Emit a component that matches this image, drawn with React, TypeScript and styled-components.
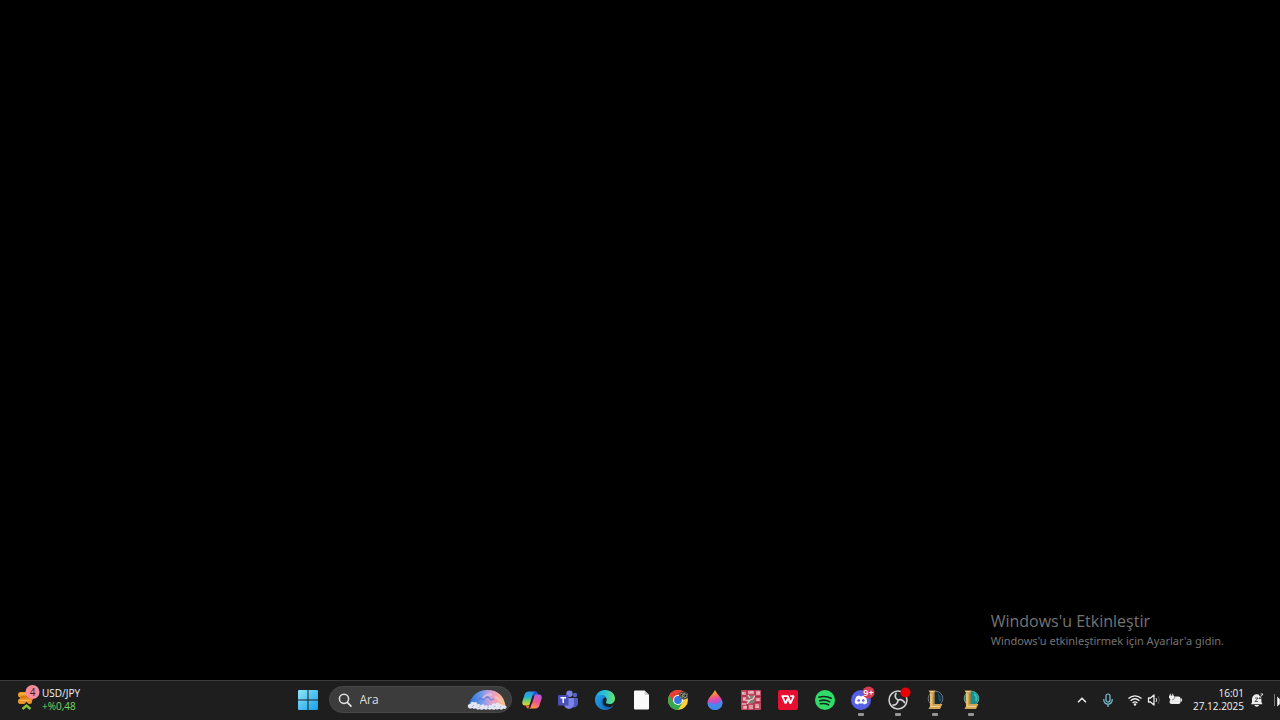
import React from "react";
import styled, { createGlobalStyle } from "styled-components";

const GlobalStyle = createGlobalStyle`
  * { box-sizing: border-box; }
  body {
    margin: 0;
    background: #000;
    font-family: "Open Sans", "Noto Sans", sans-serif;
    overflow: hidden;
  }
  button, input { font: inherit; color: inherit; }
`;

const Screen = styled.div`
  min-height: 100vh;
  display: flex;
  flex-direction: column;
  background: #000;
`;

const Desktop = styled.main`
  flex: 1;
  display: flex;
  align-items: flex-end;
  justify-content: flex-end;
  padding: 0 56px 30px 0;
`;

const Watermark = styled.section`
  color: #747474;
  white-space: nowrap;
`;

const WatermarkTitle = styled.h1`
  margin: 0;
  font-size: 16px;
  font-weight: 400;
  line-height: 22px;
`;

const WatermarkText = styled.p`
  margin: 0;
  font-family: "Noto Sans", "Open Sans", sans-serif;
  font-size: 11px;
  line-height: 18px;
`;

const Taskbar = styled.footer`
  height: 40px;
  display: grid;
  grid-template-columns: 1fr auto 1fr;
  align-items: stretch;
  padding-bottom: 2px;
  background: #1e1e1e;
  border-top: 1px solid #3a3a3a;
  color: #f4f4f4;
`;

const PlainButton = styled.button`
  display: flex;
  align-items: center;
  justify-content: center;
  padding: 0;
  border: 0;
  background: transparent;
`;

const WidgetButton = styled(PlainButton)`
  justify-self: start;
  gap: 2px;
  padding-left: 16px;
  text-align: left;
`;

const Lines = styled.span<{ $align?: string }>`
  display: flex;
  flex-direction: column;
  text-align: ${(p) => p.$align ?? "left"};
  font-size: 10px;
  line-height: 13px;
  white-space: nowrap;
`;

const Pair = styled.span`
  font-weight: 500;
`;

const Gain = styled.span`
  color: #76d663;
`;

const Center = styled.nav`
  display: flex;
  align-items: center;
  gap: 10px;
`;

const StartButton = styled(PlainButton)`
  width: 22px;
  height: 37px;
`;

const Search = styled.label`
  display: flex;
  align-items: center;
  gap: 8px;
  width: 183px;
  height: 27px;
  padding: 0 4px 0 8px;
  border: 1px solid #484848;
  border-radius: 14px;
  background: #3c3c3c;
`;

const SearchInput = styled.input`
  flex: 1;
  min-width: 0;
  padding: 0;
  border: 0;
  outline: 0;
  background: transparent;
  font-size: 12px;
  line-height: 18px;
  &::placeholder { color: #dedede; opacity: 1; }
`;

const Apps = styled.div`
  display: flex;
  justify-content: space-between;
  width: 460px;
  margin-right: 2px;
`;

const AppButton = styled(PlainButton)<{ $running?: boolean }>`
  position: relative;
  width: 20px;
  height: 37px;
  &::after {
    content: "";
    display: ${(p) => (p.$running ? "block" : "none")};
    position: absolute;
    bottom: 2px;
    left: 7px;
    width: 6px;
    height: 3px;
    border-radius: 1px;
    background: #959595;
  }
`;

const Tray = styled.div`
  display: flex;
  align-items: center;
  justify-content: flex-end;
`;

const TrayButton = styled(PlainButton)<{ $gap?: number }>`
  gap: 3px;
  height: 37px;
  margin-right: ${(p) => p.$gap ?? 0}px;
`;

const ShowDesktop = styled(PlainButton)`
  width: 8px;
  height: 37px;
`;

const Icon = styled.svg`
  display: block;
  flex: none;
  overflow: visible;
`;

type IconProps = { w?: number; h?: number; children: React.ReactNode };
const Glyph = ({ w = 20, h = 20, children }: IconProps) => (
  <Icon width={w} height={h} viewBox={`0 0 ${w} ${h}`} fill="none" aria-hidden="true">
    {children}
  </Icon>
);

const CurrencyIcon = () => (
  <Glyph w={24} h={26}>
    <rect x="2" y="5" width="14" height="5.500" rx="2.500" fill="#f09a2a" />
    <rect x="4" y="8.500" width="13" height="5.500" rx="2.500" fill="#d97a14" />
    <rect x="2" y="11.500" width="14" height="5.500" rx="2.500" fill="#ee932b" />
    <path d="M4 7h6M4 13.500h9" stroke="#ffb850" />
    <path d="M6.500 22 10.500 18l4 4" stroke="#1e1e1e" strokeWidth="4.500" />
    <path d="M6.500 22 10.500 18.500l4 3.500" stroke="#86c440" strokeWidth="2.400" />
    <circle cx="16.500" cy="5" r="7" fill="#f78b9d" />
    <text x="16.500" y="8.500" textAnchor="middle" fontSize="10" fill="#3a1a22">4</text>
  </Glyph>
);

const StartIcon = () => (
  <Glyph>
    <defs>
      <linearGradient id="start" x1="0" y1="0" x2="20" y2="20" gradientUnits="userSpaceOnUse">
        <stop stopColor="#8fe6fb" />
        <stop offset="1" stopColor="#129fe6" />
      </linearGradient>
    </defs>
    <path d="M1 0h8.500v9.500H0V1a1 1 0 0 1 1-1zM10.500 0H19a1 1 0 0 1 1 1v8.500h-9.500zM0 10.500h9.500V20H1a1 1 0 0 1-1-1zM10.500 10.500H20V19a1 1 0 0 1-1 1h-8.500z" fill="url(#start)" />
  </Glyph>
);

const SearchIcon = () => (
  <Glyph w={14} h={14}>
    <circle cx="6" cy="5.800" r="4.600" stroke="#e2e2e2" strokeWidth="1.500" />
    <path d="m9.300 9.300 3.700 3.900" stroke="#e2e2e2" strokeWidth="1.700" strokeLinecap="round" />
  </Glyph>
);

const SkyIcon = () => (
  <Glyph w={40} h={20}>
    <defs>
      <linearGradient id="sky" x1="2" y1="10" x2="38" y2="10" gradientUnits="userSpaceOnUse">
        <stop stopColor="#2671d8" />
        <stop offset=".35" stopColor="#6e9bea" />
        <stop offset=".6" stopColor="#d9a0d8" />
        <stop offset=".8" stopColor="#f5a6a0" />
        <stop offset="1" stopColor="#ffc884" />
      </linearGradient>
    </defs>
    <path d="M1.500 16C4 6 10 0 20.500 0S37 6 38.500 16z" fill="url(#sky)" />
    <path d="m10 11 3-3 3 2 4-4 4 4 3-1" stroke="#5673d0" strokeWidth="1.500" opacity=".6" />
    <path d="M16 8q4-5 9-3M28 7q4 1 6 5" stroke="#f9d2df" strokeWidth="2" opacity=".6" />
    <path d="M1 17c-1-2 1-3.500 2.500-3 0-2.500 2.500-3 3.500-1.500 1.500-1.500 3.500 0 3.500 2 1.500-1 3 0 3 1.200 1-2 3.500-2 4 0 1.500-1 3-.5 3.500.8 1-1.500 2.500-2 3.500-1 .5-2.500 3-3 4-1.500 1-2.200 4-2.200 4.500.5 1.500-.8 3 0 3 1.500 1.500-1.300 4-.3 3.500 1.500-.5 1.500-2 1.800-3 1-1 1.500-3 1.500-4 .2-1 1-3 1-4 .2-1 1.200-3 1.200-4 .2-1 .8-2.500.8-3.500-.1-1.200 1-3 1-4-.2-1 1.300-3 1.500-4 .1-1.500 1-3.500 1-4-.6-1.500.8-3 .7-3.500-.4C3 19 1.500 18.500 1 17z" fill="#e4e6f3" />
    <path d="m5 17 2-2M11.500 18l2-2M20 18.500l2-1.500M26.500 17l2-1M33 17.500l1-1.500" stroke="#a9b4dc" />
  </Glyph>
);

const CopilotIcon = () => (
  <Glyph>
    <defs>
      <linearGradient id="copA" x1="5" y1="1" x2="5" y2="16" gradientUnits="userSpaceOnUse">
        <stop stopColor="#2a8fee" />
        <stop offset=".4" stopColor="#22b4cf" />
        <stop offset=".7" stopColor="#8bd15a" />
        <stop offset="1" stopColor="#f4d52c" />
      </linearGradient>
      <linearGradient id="copB" x1="16" y1="4" x2="10" y2="19" gradientUnits="userSpaceOnUse">
        <stop stopColor="#b45ce8" />
        <stop offset=".5" stopColor="#ef5688" />
        <stop offset="1" stopColor="#ff9d4b" />
      </linearGradient>
    </defs>
    <path d="M12 1.500h1.500c1.200 0 1.900.6 2.200 1.700l.8 2.300H10z" fill="#2358cf" />
    <path d="M6.500 1.500h7c-1.300 0-2 1-2.400 2.300L8 13.500c-.5 1.500-1.300 2-2.600 2H3c-2.300 0-3.200-1.800-2.600-4L2.600 4.400C3.200 2.500 4.600 1.500 6.500 1.500z" fill="url(#copA)" />
    <path d="M13.500 18.500h-7c1.300 0 2-1 2.400-2.300L12 6.500c.5-1.500 1.300-2 2.600-2H17c2.300 0 3.200 1.800 2.600 4l-2.200 7.100c-.6 1.900-2 2.900-3.900 2.900z" fill="url(#copB)" />
    <path d="M3.500 15.500h4L6.500 18.500c-1.200 0-2-.7-2.400-1.800z" fill="#ee6c38" />
    <path d="m11.400 6.500-2.300 7" stroke="#252035" strokeWidth="1.600" />
  </Glyph>
);

const TeamsIcon = () => (
  <Glyph>
    <circle cx="17" cy="5" r="2.200" fill="#5a61c4" />
    <circle cx="11.500" cy="3.700" r="3.200" fill="#7b83eb" />
    <path d="M14 8h5a1 1 0 0 1 1 1v4.500a4 4 0 0 1-6 3.300z" fill="#5259bd" />
    <path d="M6 8h10v6a5 5 0 0 1-10 0z" fill="#7b83eb" />
    <rect y="5" width="10.500" height="10.500" rx="1" fill="#4a50b5" />
    <path d="M2.500 7.700H8M5.250 7.700V13" stroke="#fff" strokeWidth="1.500" />
  </Glyph>
);

const EdgeIcon = () => (
  <Glyph>
    <defs>
      <linearGradient id="edgeTop" x1="0" y1="6" x2="20" y2="8" gradientUnits="userSpaceOnUse">
        <stop stopColor="#22a5e5" />
        <stop offset=".5" stopColor="#2cc4d2" />
        <stop offset="1" stopColor="#6be26a" />
      </linearGradient>
      <linearGradient id="edgeLow" x1="0" y1="9" x2="16" y2="20" gradientUnits="userSpaceOnUse">
        <stop stopColor="#209be4" />
        <stop offset="1" stopColor="#1763b5" />
      </linearGradient>
    </defs>
    <path d="M0 10C.3 4 4.500 0 10 0c6 0 10 4 10 8.500 0 3.500-2.500 5.500-5.500 5.500-2.500 0-4-1-3.500-2 1-1.200 1-3.500-.5-5C8 4.500 2 5 0 10z" fill="url(#edgeTop)" />
    <path d="M0 10c0-3 3.500-5 7-5 2.200 0 3.500 1 4.200 2.500C9.500 7 7 9 7 12c0 4 4 6.500 8.500 5 1.500-.5 2.500-1.300 3.200-1.700C17 18.500 13.500 20 10 20 4.500 20 0 15.500 0 10z" fill="url(#edgeLow)" />
    <path d="M7.500 9.500C6 13 8 18 14 17.500" stroke="#1464ad" strokeWidth="1.500" />
  </Glyph>
);

const DocumentIcon = () => (
  <Glyph>
    <path d="M4 .5h9.500l4.500 4.500v13.500a1 1 0 0 1-1 1H4a1 1 0 0 1-1-1v-17a1 1 0 0 1 1-1z" fill="#fafafa" />
    <path d="M13.500 .5V5h4.500z" fill="#cfcfcf" />
  </Glyph>
);

const ChromeIcon = () => (
  <Glyph>
    <circle cx="10" cy="10" r="10" fill="#fbd03a" />
    <path d="M10 10 1.340 5A10 10 0 0 0 10 20l4.500-7.500z" fill="#35a853" />
    <path d="M1.340 5a10 10 0 0 1 17.320 0H10l-4.500 7.200z" fill="#e63e32" />
    <circle cx="10" cy="10" r="5" fill="#fff" />
    <circle cx="10" cy="10" r="3.900" fill="#3078e3" />
    <path d="M11 3.500c2-2.500 7-2.500 9 0v4c-2 2.500-5 2-7 1.500-1.500-1-2.500-3-2-5.500z" fill="#4b4c42" />
    <path d="m11.500 5 2-2 1 3 2-3 1 3 2-2M12 7l2 1 1-2 2 2 2-2" stroke="#8d9388" strokeWidth=".9" />
    <path d="M13 4.500h1M17 5.500h1" stroke="#191c18" />
  </Glyph>
);

const PaintDropIcon = () => (
  <Glyph>
    <defs>
      <linearGradient id="drop" x1="8" y1="0" x2="12" y2="20" gradientUnits="userSpaceOnUse">
        <stop stopColor="#ffd23b" />
        <stop offset=".25" stopColor="#fb7b45" />
        <stop offset=".42" stopColor="#e84f9d" />
        <stop offset=".7" stopColor="#a04fdf" />
        <stop offset="1" stopColor="#5b6be8" />
      </linearGradient>
    </defs>
    <path d="M10 0c1.500 4 7.500 7.500 7.500 13A7.200 7.200 0 0 1 10 20a7.200 7.200 0 0 1-7.500-7C2.500 7.500 8.500 4 10 0z" fill="url(#drop)" />
    <path d="M2.500 13c3-2 5 1.500 8 1 3-.5 4-3 6.700-3.500.2.800.3 1.600.3 2.500A7.200 7.200 0 0 1 10 20a7.200 7.200 0 0 1-7.500-7z" fill="#2e9aee" opacity=".75" />
    <path d="M5 9c2-2 3 0 5-.5" stroke="#f05ba8" strokeWidth="2" opacity=".6" />
  </Glyph>
);

const CollageIcon = () => (
  <Glyph>
    <rect width="20" height="20" rx="1" fill="#c04a60" />
    <path d="M1 2h4v3H1zM7 1h6v3H7zM15 1h4v4h-4zM2 7h3v4H2zM15 8h4v3h-4zM1 13h4v2H1zM2 16h4v3H2zM8 15h4v4H8zM14 14h4v4h-4z" fill="#dc97a4" />
    <path d="M7 6h6l-1 3 2 3-4 2-4-3 2-2z" fill="#7d7c78" />
    <path d="m6 14 3-4 3-1 2-4M7 5l2 3M5 10.500h4" stroke="#dccfc9" strokeWidth="1.300" />
    <path d="M1 3h2M16 3h3M3 17h3M15 17h3M9 2h3M2 9h2M16 10h2" stroke="#f5d0d5" />
    <path d="M6 0v5M14 0v6M6.500 14v6M13 13v7M0 6h5M14 6.500h6M0 12h6M14 12.500h6" stroke="#a5203d" strokeWidth=".8" />
  </Glyph>
);

const WpsIcon = () => (
  <Glyph>
    <rect width="20" height="20" rx="2" fill="#e60f32" />
    <path d="M3.500 6.200h6.300l2.700 6.300M4.300 6.200 7.500 13.500l3-6.300M10.700 10l1.800 3.500 3.300-7.300h-3.500" stroke="#fff" strokeWidth="1.800" strokeLinejoin="bevel" />
  </Glyph>
);

const SpotifyIcon = () => (
  <Glyph>
    <circle cx="10" cy="10" r="10" fill="#2fdc6a" />
    <path d="M4 7.200c4-1.200 8.500-.9 12.200 1.100M4.700 10.700c3.500-1 7-.6 10 1M5.300 13.800c3-.7 5.700-.3 8.200 1" stroke="#17251b" strokeWidth="1.600" strokeLinecap="round" />
  </Glyph>
);

const DiscordIcon = () => (
  <Glyph>
    <circle cx="10" cy="10" r="10" fill="#5560e6" />
    <path d="M5.500 6.500C7 5.600 8 5.500 8.500 5.500l.4.800h2.200l.4-.8c1 .1 2 .4 3 1 1.300 2 1.900 4.300 1.700 6.600-1 .9-2.200 1.300-3.300 1.400l-.8-1.300c-1.400.4-2.800.4-4.200 0l-.8 1.300c-1.100-.1-2.300-.5-3.300-1.400-.2-2.400.4-4.600 1.700-6.600z" fill="#fff" />
    <circle cx="7.700" cy="10.500" r="1.300" fill="#5560e6" />
    <circle cx="12.300" cy="10.500" r="1.300" fill="#5560e6" />
    <circle cx="17.500" cy="2.500" r="6" fill="#d43e50" />
    <text x="17.500" y="5.500" textAnchor="middle" fontSize="9" fontWeight="600" fill="#fff">9+</text>
  </Glyph>
);

const ObsIcon = () => (
  <Glyph>
    <circle cx="10" cy="10" r="9" fill="#252427" stroke="#d2d2d2" strokeWidth="1.500" />
    <path d="M8 3.500c-1.500 2.500-.5 5 2 6.500M16.500 12.500c-1.500-2.700-4.500-3.500-6.500-2.500M5 15c3 .3 5-2 5-5" stroke="#d2d2d2" strokeWidth="1.700" strokeLinecap="round" />
    <circle cx="17.500" cy="2.500" r="5" fill="#eb0008" />
  </Glyph>
);

const LeagueIcon = ({ bright = false }: { bright?: boolean }) => (
  <Glyph>
    <circle cx="10.500" cy="8.500" r="7.300" fill={bright ? "#168e91" : "#122b38"} stroke={bright ? "#5fa391" : "#6d7780"} />
    <path d={bright ? "M13 4c2 1 3 4 2 7" : "M13 5c2 1 2 3 2 6"} stroke={bright ? "#35c0ba" : "#1e5063"} strokeWidth="2" />
    <path d="M3.500.5h7L9.500 2.500v11.500H17.500L15 19H3.500L5 16V3z" fill="#d3a657" />
    <path d="M5 1.500h3.500M6 3.500v13h9" stroke="#efd08c" strokeWidth="1.200" />
    <path d="M9 3v11" stroke="#936a2c" />
  </Glyph>
);

const BatteryIcon = () => (
  <Glyph w={14} h={14}>
    <path d="M3 3.500h7.500a2 2 0 0 1 2 2V9a2 2 0 0 1-2 2h-7a2 2 0 0 1-2-2z" fill="#ececec" />
    <path d="M13.300 5.500v3" stroke="#e8e8e8" strokeWidth="1.500" />
    <path d="M2.300.8v2M4.700.8v2" stroke="#eee" />
    <path d="M1 2.500h5V4C6 5.500 4.800 6.200 3.500 6.200S1 5.500 1 4z" fill="#eee" />
    <path d="M6.800 3.500c0 2-1 3.200-2.800 3.500" stroke="#777" strokeWidth=".8" />
  </Glyph>
);

const BellIcon = () => (
  <Glyph w={14} h={14}>
    <path d="M2 9V6a4.700 4.700 0 0 1 9.400 0v3l1.100 2.200H1zM4.500 12h4.500c-.3 1.100-1.100 1.700-2.200 1.700S4.800 13.100 4.500 12z" fill="#eee" />
    <path d="M5 5h3L5 8.500h3M9 2.500h2.500L9 5.500h2.500" stroke="#444" strokeWidth=".9" />
    <path d="M10.500 1h2.500l-2 2.500" stroke="#eee" strokeWidth=".9" />
  </Glyph>
);

const apps: { name: string; icon: React.ReactNode; running?: boolean }[] = [
  { name: "Copilot", icon: <CopilotIcon /> },
  { name: "Teams", icon: <TeamsIcon /> },
  { name: "Edge", icon: <EdgeIcon /> },
  { name: "Belge", icon: <DocumentIcon /> },
  { name: "Chrome", icon: <ChromeIcon /> },
  { name: "Paint", icon: <PaintDropIcon /> },
  { name: "Kolaj", icon: <CollageIcon /> },
  { name: "WPS Office", icon: <WpsIcon /> },
  { name: "Spotify", icon: <SpotifyIcon /> },
  { name: "Discord", icon: <DiscordIcon />, running: true },
  { name: "OBS Studio", icon: <ObsIcon />, running: true },
  { name: "League of Legends", icon: <LeagueIcon />, running: true },
  { name: "League of Legends 2", icon: <LeagueIcon bright />, running: true },
];

export default function App() {
  return (
    <Screen>
      <GlobalStyle />
      <Desktop>
        <Watermark>
          <WatermarkTitle>Windows'u Etkinleştir</WatermarkTitle>
          <WatermarkText>Windows'u etkinleştirmek için Ayarlar'a gidin.</WatermarkText>
        </Watermark>
      </Desktop>
      <Taskbar>
        <WidgetButton>
          <CurrencyIcon />
          <Lines>
            <Pair>USD/JPY</Pair>
            <Gain>+%0,48</Gain>
          </Lines>
        </WidgetButton>
        <Center>
          <StartButton aria-label="Başlat"><StartIcon /></StartButton>
          <Search>
            <SearchIcon />
            <SearchInput type="text" placeholder="Ara" aria-label="Ara" />
            <SkyIcon />
          </Search>
          <Apps>
            {apps.map((app) => (
              <AppButton key={app.name} aria-label={app.name} $running={app.running}>
                {app.icon}
              </AppButton>
            ))}
          </Apps>
        </Center>
        <Tray>
          <TrayButton aria-label="Gizli simgeler" $gap={15}>
            <Glyph w={10} h={10}>
              <path d="m1 7.200 4-4 4 4" stroke="#eee" strokeWidth="1.500" />
            </Glyph>
          </TrayButton>
          <TrayButton aria-label="Mikrofon" $gap={14}>
            <Glyph w={12} h={14}>
              <rect x="4" y="1" width="4" height="8" rx="2" stroke="#7cc5d9" strokeWidth="1.200" />
              <path d="M1.800 6v1a4.200 4.200 0 0 0 8.400 0V6M6 11.200V14" stroke="#7cc5d9" strokeWidth="1.200" />
            </Glyph>
          </TrayButton>
          <TrayButton aria-label="Ağ, ses ve pil" $gap={11}>
            <Glyph w={14} h={14}>
              <path d="M.5 5.500c3.800-3.600 9.200-3.600 13 0M2.600 7.800c2.700-2.500 6.100-2.500 8.800 0M4.600 10c1.500-1.400 3.300-1.400 4.800 0" stroke="#eee" strokeWidth="1.300" />
              <circle cx="7" cy="11.500" r="1.200" fill="#eee" />
            </Glyph>
            <Glyph w={20} h={14}>
              <path d="M3.500 5h2l3.500-3v10L5.500 9h-2z" stroke="#eee" strokeWidth="1.300" strokeLinejoin="round" />
              <path d="M11 5q1.500 2 0 4" stroke="#ddd" />
              <path d="M13 3q3 4 0 8" stroke="#555" />
            </Glyph>
            <BatteryIcon />
          </TrayButton>
          <TrayButton $gap={6}>
            <Lines $align="right">
              <span>16:01</span>
              <span>27.12.2025</span>
            </Lines>
          </TrayButton>
          <TrayButton aria-label="Bildirimler" $gap={8}><BellIcon /></TrayButton>
          <ShowDesktop aria-label="Masaüstünü göster">
            <Glyph w={8} h={16}>
              <path d="M2.500 2v12" stroke="#777" />
              <path d="M5 4v11l3-2.700V7z" fill="#fff" stroke="#111" strokeWidth=".5" />
            </Glyph>
          </ShowDesktop>
        </Tray>
      </Taskbar>
    </Screen>
  );
}
